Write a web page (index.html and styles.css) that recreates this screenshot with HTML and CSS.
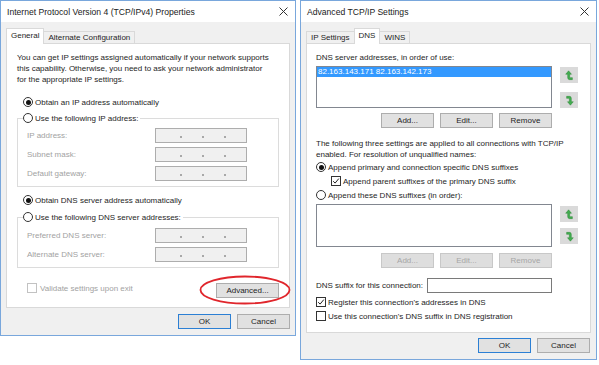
FILE: index.html
```html
<!DOCTYPE html>
<html lang="en">
<head>
    <meta charset="UTF-8">
    <title>TCP/IPv4 Properties</title>
    <link rel="stylesheet" href="styles.css">
</head>
<body>
    <div class="desk">
        <!-- IPv4 properties dialog -->
        <div class="win win-ipv4">
            <div class="titlebar">
                <span>Internet Protocol Version 4 (TCP/IPv4) Properties</span>
                <svg class="close" viewBox="0 0 9 9"><path d="M0.5 0.5 L8.5 8.5 M8.5 0.5 L0.5 8.5"/></svg>
            </div>
            <div class="winbody">
                <div class="tabs">
                    <div class="tab active">General</div>
                    <div class="tab">Alternate Configuration</div>
                </div>
                <div class="panel">
                    <p class="intro">You can get IP settings assigned automatically if your network supports<br>this capability. Otherwise, you need to ask your network administrator<br>for the appropriate IP settings.</p>

                    <div class="opt opt-ip"><span class="radio on"></span>Obtain an IP address automatically</div>

                    <fieldset class="group group-ip">
                        <legend><span class="opt"><span class="radio"></span>Use the following IP address:</span></legend>
                        <div class="fields">
                            <span class="dis">IP address:</span>
                            <div class="ipbox"><i></i><i></i><i></i></div>
                            <span class="dis">Subnet mask:</span>
                            <div class="ipbox"><i></i><i></i><i></i></div>
                            <span class="dis">Default gateway:</span>
                            <div class="ipbox"><i></i><i></i><i></i></div>
                        </div>
                    </fieldset>

                    <div class="opt opt-dns"><span class="radio on"></span>Obtain DNS server address automatically</div>

                    <fieldset class="group group-dns">
                        <legend><span class="opt"><span class="radio"></span>Use the following DNS server addresses:</span></legend>
                        <div class="fields">
                            <span class="dis">Preferred DNS server:</span>
                            <div class="ipbox"><i></i><i></i><i></i></div>
                            <span class="dis">Alternate DNS server:</span>
                            <div class="ipbox"><i></i><i></i><i></i></div>
                        </div>
                    </fieldset>

                    <div class="panel-foot">
                        <div class="check dis"><span class="box box-dis"></span>Validate settings upon exit</div>
                        <div class="adv-wrap">
                            <button class="btn btn-adv">Advanced...</button>
                            <svg class="ring" viewBox="0 0 92 30"><ellipse cx="46" cy="15" rx="44.5" ry="13.5"/></svg>
                        </div>
                    </div>
                </div>
                <div class="actions">
                    <button class="btn focus">OK</button>
                    <button class="btn">Cancel</button>
                </div>
            </div>
        </div>

        <!-- Advanced TCP/IP settings dialog -->
        <div class="win win-adv">
            <div class="titlebar">
                <span>Advanced TCP/IP Settings</span>
                <svg class="close" viewBox="0 0 9 9"><path d="M0.5 0.5 L8.5 8.5 M8.5 0.5 L0.5 8.5"/></svg>
            </div>
            <div class="winbody">
                <div class="tabs">
                    <div class="tab">IP Settings</div>
                    <div class="tab active">DNS</div>
                    <div class="tab">WINS</div>
                </div>
                <div class="panel panel-adv">
                    <div class="lbl">DNS server addresses, in order of use:</div>
                    <div class="listrow">
                        <div class="listbox">
                            <div class="sel">82.163.143.171 82.163.142.173</div>
                        </div>
                        <div class="arrows">
                            <div class="arrow"><svg viewBox="0 0 10 12"><path d="M4 0.8 L0.8 4.6 H3 V8.6 Q3 10.6 5 10.6 H8.2 V8.4 H5.9 Q5.2 8.4 5.2 7.7 V4.6 H7.2 Z"/></svg></div>
                            <div class="arrow"><svg viewBox="0 0 10 12"><path transform="rotate(180 5 6)" d="M4 0.8 L0.8 4.6 H3 V8.6 Q3 10.6 5 10.6 H8.2 V8.4 H5.9 Q5.2 8.4 5.2 7.7 V4.6 H7.2 Z"/></svg></div>
                        </div>
                    </div>
                    <div class="btnrow">
                        <button class="btn">Add...</button>
                        <button class="btn">Edit...</button>
                        <button class="btn">Remove</button>
                    </div>

                    <p class="note">The following three settings are applied to all connections with TCP/IP<br>enabled. For resolution of unqualified names:</p>
                    <div class="row"><span class="radio on"></span>Append primary and connection specific DNS suffixes</div>
                    <div class="row row-indent"><span class="box"><svg viewBox="0 0 8 8"><path d="M1.2 4.2 L3.1 6.1 L6.8 1.6"/></svg></span>Append parent suffixes of the primary DNS suffix</div>
                    <div class="row"><span class="radio"></span>Append these DNS suffixes (in order):</div>

                    <div class="listrow listrow-suffix">
                        <div class="listbox listbox-tall"></div>
                        <div class="arrows arrows-suffix">
                            <div class="arrow"><svg viewBox="0 0 10 12"><path d="M4 0.8 L0.8 4.6 H3 V8.6 Q3 10.6 5 10.6 H8.2 V8.4 H5.9 Q5.2 8.4 5.2 7.7 V4.6 H7.2 Z"/></svg></div>
                            <div class="arrow"><svg viewBox="0 0 10 12"><path transform="rotate(180 5 6)" d="M4 0.8 L0.8 4.6 H3 V8.6 Q3 10.6 5 10.6 H8.2 V8.4 H5.9 Q5.2 8.4 5.2 7.7 V4.6 H7.2 Z"/></svg></div>
                        </div>
                    </div>
                    <div class="btnrow btnrow-dis">
                        <button class="btn" disabled>Add...</button>
                        <button class="btn" disabled>Edit...</button>
                        <button class="btn" disabled>Remove</button>
                    </div>

                    <div class="suffix">
                        <span>DNS suffix for this connection:</span>
                        <div class="textbox"></div>
                    </div>
                    <div class="row row-first"><span class="box"><svg viewBox="0 0 8 8"><path d="M1.2 4.2 L3.1 6.1 L6.8 1.6"/></svg></span>Register this connection's addresses in DNS</div>
                    <div class="row"><span class="box"></span>Use this connection's DNS suffix in DNS registration</div>
                </div>
                <div class="actions actions-adv">
                    <button class="btn focus">OK</button>
                    <button class="btn">Cancel</button>
                </div>
            </div>
        </div>
    </div>
</body>
</html>
```

FILE: styles.css
```css
body {
    margin: 0;
    background-color: #fff;
    font-family: "Liberation Sans", Arial, sans-serif;
    font-size: 8px;
    color: #1e1e1e;
}

.desk {
    display: flex;
    align-items: flex-start;
    gap: 4px;
}

/* window frame */
.win {
    box-sizing: border-box;
    border: 1px solid #79a7dc;
    background-color: #f0f0f0;
    display: flex;
    flex-direction: column;
}

.win-ipv4 {
    width: 296px;
    height: 336px;
}

.win-adv {
    width: 297px;
    height: 360px;
}

.titlebar {
    height: 21px;
    background-color: #fff;
    display: flex;
    align-items: center;
    justify-content: space-between;
    padding: 0 7px 0 6px;
    font-size: 8.6px;
    color: #1a1a1a;
}

.close {
    width: 9px;
    height: 9px;
}

.close path {
    stroke: #333;
    stroke-width: 1;
    fill: none;
}

.winbody {
    flex: 1;
    padding: 6px 5px 0;
    display: flex;
    flex-direction: column;
}

/* tabs */
.tabs {
    display: flex;
    align-items: flex-end;
    height: 15px;
}

.tab {
    box-sizing: border-box;
    height: 12px;
    line-height: 11px;
    padding: 0 4px;
    border: 1px solid #d9d9d9;
    border-bottom: none;
    background-color: #f0f0f0;
    margin-right: -1px;
}

.tab.active {
    position: relative;
    z-index: 1;
    height: 16px;
    line-height: 13px;
    margin-bottom: -1px;
    background-color: #fff;
}

.panel {
    box-sizing: border-box;
    height: 265px;
    background-color: #fff;
    border: 1px solid #d9d9d9;
}

.panel-adv {
    height: 290px;
    padding: 8px 9px 0;
}

/* form bits */
.intro {
    margin: 8px 10px 0;
    line-height: 11px;
}

.opt {
    display: flex;
    align-items: center;
    gap: 2px;
    height: 14px;
}

.opt-ip {
    margin: 10px 0 0 16px;
}

.opt-dns {
    margin: 6px 0 0 16px;
}

.radio {
    box-sizing: border-box;
    width: 10px;
    height: 10px;
    border: 1px solid #333;
    border-radius: 50%;
    background-color: #fff;
    display: inline-flex;
    align-items: center;
    justify-content: center;
    flex-shrink: 0;
}

.radio.on::after {
    content: '';
    width: 5px;
    height: 5px;
    border-radius: 50%;
    background-color: #111;
}

.box {
    box-sizing: border-box;
    width: 10px;
    height: 10px;
    border: 1px solid #333;
    background-color: #fff;
    display: inline-flex;
    flex-shrink: 0;
}

.box svg {
    width: 8px;
    height: 8px;
}

.box path {
    stroke: #222;
    stroke-width: 1;
    fill: none;
}

.box-dis {
    border-color: #c2c2c2;
}

.group {
    margin: 2px 10px 0;
    padding: 0 5px 5px;
    border: 1px solid #dcdcdc;
    min-width: 0;
}

.group-dns {
    margin-top: 3px;
}

.group legend {
    padding: 0 2px 0 0;
}

.fields {
    display: grid;
    grid-template-columns: 128px 92px;
    row-gap: 4px;
    align-items: center;
    margin: 3px 0 0 4px;
}

.group-dns .fields {
    margin-top: 4px;
}

.dis {
    color: #a2a2a2;
}

.ipbox {
    box-sizing: border-box;
    width: 92px;
    height: 15px;
    border: 1px solid #adadad;
    background-color: #f0f0f0;
    display: flex;
    align-items: flex-end;
    gap: 20px;
    padding: 0 0 4px 24px;
}

.ipbox i {
    width: 2px;
    height: 2px;
    background-color: #a8a8a8;
}

.panel-foot {
    display: flex;
    align-items: flex-start;
    justify-content: space-between;
    margin: 15px 10px 0 20px;
}

.check {
    display: flex;
    align-items: center;
    gap: 3px;
    height: 10px;
}

.adv-wrap {
    position: relative;
}

.ring {
    position: absolute;
    left: -17px;
    top: -8px;
    width: 92px;
    height: 30px;
    overflow: visible;
}

.ring ellipse {
    fill: none;
    stroke: #e0262c;
    stroke-width: 1.8;
}

/* buttons */
.btn {
    box-sizing: border-box;
    width: 53px;
    height: 15px;
    padding: 0;
    border: 1px solid #adadad;
    background-color: #e1e1e1;
    font: inherit;
    color: #1e1e1e;
}

.btn-adv {
    width: 63px;
    display: block;
}

.btn.focus {
    border-color: #2b7fd4;
}

.btn:disabled {
    color: #a6a6a6;
    background-color: #dedede;
    border-color: #c8c8c8;
}

.actions {
    display: flex;
    justify-content: flex-end;
    gap: 6px;
    margin-top: 6px;
}

.actions-adv {
    margin-top: 5px;
    padding-right: 1px;
}

/* advanced dialog */
.lbl {
    line-height: 11px;
}

.listrow {
    display: flex;
    gap: 8px;
    margin-top: 3px;
}

.listbox {
    box-sizing: border-box;
    width: 236px;
    height: 42px;
    border: 1px solid #828790;
    background-color: #fff;
}

.listbox-tall {
    height: 43px;
}

.sel {
    height: 10px;
    line-height: 10px;
    padding-left: 1px;
    background-color: #3399ff;
    color: #fff;
}

.arrows {
    display: flex;
    flex-direction: column;
    gap: 9px;
    padding-top: 1px;
}

.arrows-suffix {
    gap: 6px;
    padding-top: 2px;
}

.arrow {
    width: 18px;
    height: 16px;
    background-color: #dadada;
    display: flex;
    align-items: center;
    justify-content: center;
}

.arrow svg {
    width: 9px;
    height: 11px;
}

.arrow path {
    fill: #43ad50;
    stroke: #23812f;
    stroke-width: 0.5;
}

.btnrow {
    width: 236px;
    display: flex;
    justify-content: flex-end;
    gap: 6px;
    margin-top: 5px;
}

.btnrow-dis {
    margin-top: 6px;
}

.note {
    margin: 10px 0 0;
    line-height: 11px;
}

.row {
    display: flex;
    align-items: center;
    gap: 2px;
    height: 14px;
}

.row-indent {
    padding-left: 15px;
}

.row-first {
    margin-top: 2px;
}

.listrow-suffix {
    margin-top: 2px;
}

.suffix {
    width: 236px;
    display: flex;
    align-items: center;
    justify-content: space-between;
    margin-top: 10px;
}

.textbox {
    box-sizing: border-box;
    width: 125px;
    height: 15px;
    border: 1px solid #7a7a7a;
    background-color: #fff;
}
```
